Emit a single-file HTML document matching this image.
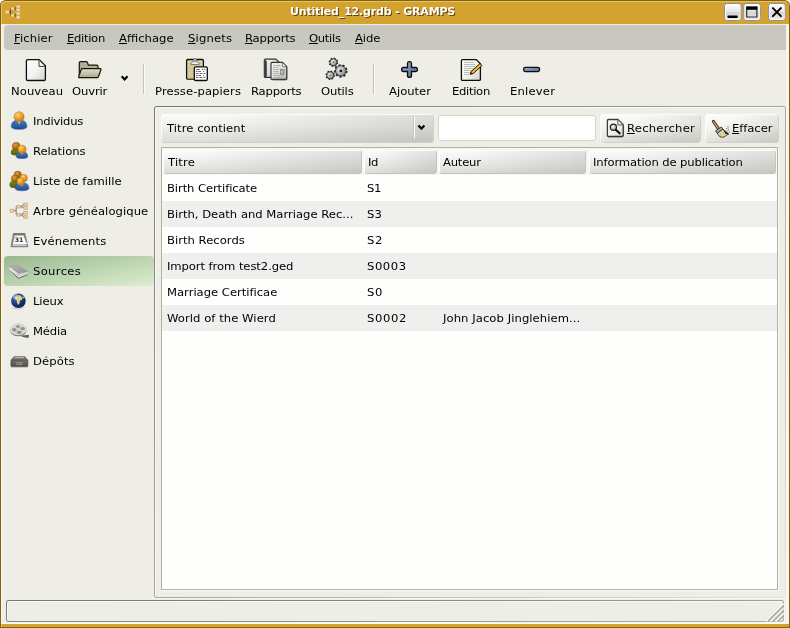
<!DOCTYPE html>
<html lang="fr">
<head>
<meta charset="utf-8">
<title>Untitled_12.grdb - GRAMPS</title>
<style>
*{box-sizing:border-box;margin:0;padding:0}
html,body{width:790px;height:628px;overflow:hidden;background:#fff}
body{font-family:"DejaVu Sans","Liberation Sans",sans-serif;font-size:11px;color:#000;position:relative}
#win{position:absolute;left:0;top:0;width:790px;height:628px;background:#85620f;border-radius:5.5px 5.5px 0 0;overflow:hidden}
#gold{position:absolute;left:1px;top:1px;width:788px;height:626px;background:#d4a22f;border-radius:4.5px 4.5px 0 0;border-top:1px solid #e6c262;border-left:1px solid #e6c262}
#inner{position:absolute;left:1px;top:24px;width:788px;height:600px;background:#eeede6;border-right:3px solid #f6f5f0;border-left:1px solid #f6f6f2;border-bottom:1px solid #fbfbf8}
#title{will-change:transform;position:absolute;left:290px;top:5px;height:13px;line-height:13px;color:#fff;font-weight:bold;font-size:11px;white-space:nowrap;text-shadow:1px 1px 0 rgba(70,45,0,.8);letter-spacing:-0.17px}
#menubar{position:absolute;left:4px;top:25px;width:782px;height:25px;background:#c9c8c0;border-radius:4px 0 0 4px}
.t{will-change:transform;transform:scaleX(1.055);transform-origin:0 0;position:absolute;height:13px;line-height:13px;white-space:nowrap}
.wb{position:absolute;top:3px;width:18px;height:18px}
.sep{position:absolute;top:64px;width:2px;height:30px;border-left:1px solid #c4c3bb;border-right:1px solid #fbfbf8}
.frame{position:absolute;border:1px solid;border-color:#97968d #fbfbf8 #fbfbf8 #97968d}
.gframe{position:absolute;padding:1px;border-radius:3px;box-shadow:1px 1px 0 rgba(255,255,255,.55)}
.gframe>div{width:100%;height:100%;background:#eeede6;border-radius:2px;box-shadow:inset 1px 1px 0 rgba(255,255,255,.6)}
.btn{position:absolute;border-radius:4px;background:linear-gradient(90deg,rgba(255,255,255,.35),rgba(255,255,255,0) 35%,rgba(0,0,0,.075)),linear-gradient(#fbfbf9,#f0f0ec 45%,#d6d5cf);box-shadow:inset 1px 1px 0 rgba(255,255,255,.8),inset -1px -1px 0 #d0cfc8}
.hdr{position:absolute;top:150px;height:24px;border-radius:3px;background:linear-gradient(90deg,rgba(0,0,0,0) 15%,rgba(0,0,0,.105)),linear-gradient(180deg,#fdfdfc,#efefec 45%,#dbdbd6);box-shadow:inset -1px -1px 0 #c6c6c0,inset 1px 1px 0 #fff}
.row{position:absolute;left:162px;width:615px;height:26px}
.alt{background:#eff0ee}
svg{position:absolute;overflow:visible;will-change:transform}
</style>
</head>
<body>
<div id="win">
 <div id="gold"></div>
 <div id="inner"></div>
 <div id="title">Untitled_12.grdb - GRAMPS</div>
 <svg style="left:0;top:0" width="24" height="24" viewBox="0 0 24 24">
  <path d="M9 12h1.5M10.5 8.7v6.6M10.5 8.7H11M10.5 15.3H11M14 8.7h.8M14 15.3h.8M14.8 8.7l1.8-2M14.8 8.7l1.8 1.2M14.8 15.3l1.8-1.8M14.8 15.3l1.8 1.9" stroke="#5d4712" stroke-width="1" fill="none"/>
  <g fill="#f4e2c4" stroke="#d9b98a" stroke-width=".6"><rect x="5.6" y="10.9" width="3.4" height="2.2"/><rect x="11" y="7.6" width="3" height="2.2"/><rect x="11" y="14.2" width="3" height="2.2"/><rect x="16.6" y="5.5" width="3.3" height="2.2"/><rect x="16.6" y="8.8" width="3.3" height="2.2"/><rect x="16.6" y="12.4" width="3.3" height="2.2"/><rect x="16.6" y="16" width="3.3" height="2.3"/></g>
 </svg>
 <svg style="left:724px;top:3px" width="62" height="19" viewBox="0 0 62 19">
  <defs><linearGradient id="wbg" x1="0" y1="0" x2="0" y2="1"><stop offset="0" stop-color="#fdfdfd"/><stop offset=".5" stop-color="#e6e6e6"/><stop offset=".52" stop-color="#d4d5d3"/><stop offset="1" stop-color="#e9e9e8"/></linearGradient></defs>
  <g id="wb0"><path d="M2.500.500h12.600l2 2v13l-2 2h-12.600l-2-2v-13z" fill="#fff" stroke="#8c93a3"/><path d="M2.500 1.800h12.600l.700.700v13l-.700.700h-12.600l-.700-.700v-13z" fill="url(#wbg)"/></g>
  <use href="#wb0" x="19.3"/><use href="#wb0" x="44.100"/>
  <rect x="3.3" y="12.6" width="10.6" height="2.3" rx="1.1" fill="#000"/>
  <path d="M22.8 4v10h10V4z" fill="none" stroke="#222" stroke-width="1.2"/><rect x="22.2" y="3.6" width="11.2" height="3.2" fill="#000"/><rect x="23.6" y="7" width="8.6" height="6.2" fill="#dcdcda" opacity=".6"/>
  <path d="M48.900 5.100l8 8M56.900 5.100l-8 8" stroke="#000" stroke-width="2" stroke-linecap="round"/>
 </svg>
 <div id="menubar"></div>
 <div class="t" style="left:14px;top:32px;letter-spacing:0.09px"><u>F</u>ichier</div>
 <div class="t" style="left:67px;top:32px;letter-spacing:-0.30px"><u>E</u>dition</div>
 <div class="t" style="left:119px;top:32px;letter-spacing:-0.00px"><u>A</u>ffichage</div>
 <div class="t" style="left:188px;top:32px;letter-spacing:0.14px"><u>S</u>ignets</div>
 <div class="t" style="left:245px;top:32px;letter-spacing:-0.20px"><u>R</u>apports</div>
 <div class="t" style="left:309px;top:32px;letter-spacing:-0.30px"><u>O</u>utils</div>
 <div class="t" style="left:355px;top:32px;letter-spacing:-0.11px"><u>A</u>ide</div>

 <!-- toolbar -->
 <svg style="left:0;top:50px" width="790" height="56" viewBox="0 50 790 56">
  <defs>
   <linearGradient id="pg" x1="0" y1="0" x2="1" y2="1"><stop offset="0" stop-color="#ffffff"/><stop offset=".55" stop-color="#f1f1ef"/><stop offset="1" stop-color="#cfcfcb"/></linearGradient>
   <linearGradient id="pg2" x1="0" y1="0" x2="1" y2="1"><stop offset="0" stop-color="#f4f4f3"/><stop offset=".5" stop-color="#dededc"/><stop offset="1" stop-color="#b4b4b1"/></linearGradient>
   <linearGradient id="fl" x1="0" y1="0" x2="0" y2="1"><stop offset="0" stop-color="#e2e3cf"/><stop offset="1" stop-color="#a8a989"/></linearGradient>
   <linearGradient id="bl" x1="0" y1="0" x2="1" y2="1"><stop offset="0" stop-color="#a9b9d3"/><stop offset=".5" stop-color="#7489ae"/><stop offset="1" stop-color="#566b92"/></linearGradient>
   <radialGradient id="gr" cx=".4" cy=".4" r=".7"><stop offset="0" stop-color="#f2f2f2"/><stop offset=".5" stop-color="#b2b2b2"/><stop offset="1" stop-color="#6a6a6a"/></radialGradient>
  </defs>
  <!-- new -->
  <path d="M27.6 59.6h11.6l6.2 6.2v13.4q0 1.2-1.2 1.2H27.6q-1.2 0-1.2-1.2V60.8q0-1.2 1.2-1.2z" fill="url(#pg)" stroke="#0c0c0c" stroke-width="1.3"/>
  <path d="M39 60.400v6h6" fill="#f2f2f0" stroke="#3a3a3a" stroke-width="1"/>
  <path d="M27 80.6h17.6" stroke="#b9b9b0" stroke-width="1" opacity=".8" transform="translate(.6 .9)"/>
  <!-- open folder -->
  <path d="M79.3 76.5V62.8q0-1.2 1.2-1.2h5.6q1 0 1.4 1l.9 2.6h8.4q1.2 0 1.2 1.2v2.2H82z" fill="#b0b192" stroke="#15150c" stroke-width="1.2" stroke-linejoin="round"/>
  <path d="M81.6 68.6h18.6q1.1 0 .7 1.1l-2.5 7q-.4 1-1.5 1H79.4q-1.1 0-.7-1.1z" fill="url(#fl)" stroke="#15150c" stroke-width="1.2" stroke-linejoin="round"/>
  <path d="M79.5 78.6h18.5" stroke="#b5b5aa" stroke-width="1" opacity=".8"/>
  <path d="M120.9 77.1l1.5-1.5 2.2 2.2 2.2-2.2 1.5 1.5-3.7 4z" fill="#000"/>
  <!-- clipboard -->
  <rect x="186.600" y="59.500" width="16.800" height="19.700" rx="1.200" fill="#ddd3a6" stroke="#0c0c0c" stroke-width="1.300"/>
  <path d="M187.800 63.500h14.400M187.800 65.500h14.400M187.800 67.500h14.400M187.800 69.500h14.400M187.800 71.500h14.400M187.800 73.500h14.400M187.800 75.500h14.400M187.800 77.500h14.400" stroke="#c6ba88" stroke-width=".800"/>
  <path d="M187.600 78.400h8" stroke="#b39a4a" stroke-width="1"/>
  <path d="M190.800 63.600l2.300-2.600q.2-2.500 1.900-2.500t1.900 2.500l2.300 2.600q.5.900-.500.900h-7.400q-1 0-.500-.900z" fill="#d9d9d9" stroke="#555" stroke-width=".700"/>
  <path d="M193.600 60.300h2.800v1.500h-2.800z" fill="#8a8a8a"/>
  <path d="M192.300 63.300h5.400" stroke="#f6f6f6" stroke-width="1"/>
  <rect x="194.300" y="66.900" width="13" height="13.600" rx="1.300" fill="#fdfdfd" stroke="#0c0c0c" stroke-width="1.300"/>
  <path d="M196 69.500h3.800M201.800 69.500h1.200M203.800 69.500h1.600M196 71.500h1.600M198.300 71.500h2.800M203 71.500h1.200M196 73.500h2.400M199.500 73.500h3M203.500 73.500h1.900M196 75.500h1.600M198.300 75.500h2.800M203 75.500h1M196 77.500h2.400M199.500 77.500h3M203.500 77.500h1.900" stroke="#6a6a6a" stroke-width="1"/>
  <!-- reports -->
  <path d="M265.300 59.100h10.600l4 4v13.300q0 1-1 1H265.300q-1 0-1-1V60.100q0-1 1-1z" fill="url(#pg2)" stroke="#333" stroke-width="1.100"/>
  <path d="M264.600 59.400l2.200 1.800v15.400l-2.200 .900z" fill="#3a3a3a"/>
  <path d="M272 62.400h10.500l4.200 4.200v11.800q0 1-1 1H272q-1 0-1-1V63.400q0-1 1-1z" fill="url(#pg2)" stroke="#333" stroke-width="1.100"/>
  <path d="M282.500 62.900v3.700h3.700" fill="#ededeb" stroke="#666" stroke-width=".700"/>
  <path d="M273.500 65.500h7M273.500 67.500h5M273.500 69.500h5.500M273.500 71.500h5M273.500 73.500h5.500M273.500 75.500h10M273.500 77.500h9" stroke="#a6a6a4" stroke-width="1" stroke-dasharray="2 .700 1.500 .600"/>
  <rect x="280.400" y="69.400" width="3.600" height="4.800" fill="#94a190" stroke="#6e6e6e" stroke-width=".500"/><rect x="281.300" y="70.600" width="1.400" height="2.800" fill="#ddd27a"/><rect x="282.600" y="70" width=".900" height="1.300" fill="#8aaed4"/>
  <path d="M272.500 80.300h13.800M287.400 67.500v12" stroke="#77776f" stroke-width="1" opacity=".6"/>
  <!-- gears -->
  <g fill="none" stroke="#1e1e1e">
   <circle cx="333.400" cy="62.300" r="3.900" stroke-width="1.700" stroke-dasharray="1.550 1.510"/>
   <circle cx="330.200" cy="75.300" r="3.900" stroke-width="1.700" stroke-dasharray="1.550 1.510"/>
   <circle cx="340.800" cy="70.900" r="5.700" stroke-width="2.100" stroke-dasharray="2.050 1.930"/>
  </g>
  <g fill="url(#gr)" stroke="#262626" stroke-width=".800">
   <circle cx="333.400" cy="62.300" r="3.600"/><circle cx="330.200" cy="75.300" r="3.600"/><circle cx="340.800" cy="70.900" r="5.300"/>
  </g>
  <circle cx="333.400" cy="62.300" r=".800" fill="#444"/><circle cx="330.200" cy="75.300" r=".800" fill="#444"/><circle cx="340.800" cy="70.900" r="1.400" fill="#1a1a1a"/>
  <!-- plus -->
  <path d="M409.500 61.600q2 0 2 2v3.900h3.900q2 0 2 2t-2 2h-3.900v3.900q0 2-2 2t-2-2v-3.900h-3.900q-2 0-2-2t2-2h3.900v-3.900q0-2 2-2z" fill="url(#bl)" stroke="#0d0d10" stroke-width="1.300"/>
  <!-- edit -->
  <path d="M462.600 59.600h13.600l4.200 4.200v15.400q0 1.200-1.200 1.200H462.600q-1.200 0-1.200-1.200V60.800q0-1.200 1.200-1.200z" fill="url(#pg)" stroke="#0c0c0c" stroke-width="1.300"/>
  <path d="M464 62.500h10M464 64.500h11M464 66.500h11M464 68.500h11M464 70.500h8M464 72.500h6M464 74.500h5" stroke="#b4b4b0" stroke-width=".9"/>
  <path d="M470.300 74.300l1-2.800 8.600-8 2 2.000-8.700 8.100z" fill="#f4b72a" stroke="#1a1405" stroke-width="1"/>
  <path d="M470.300 74.300l.7-2 1.500 1.400z" fill="#111"/>
  <!-- minus -->
  <rect x="523.600" y="67.400" width="16" height="4.200" rx="1.800" fill="url(#bl)" stroke="#0d0d10" stroke-width="1.300"/>
 </svg>
 <div class="t" style="left:11px;top:85px;letter-spacing:0.07px">Nouveau</div>
 <div class="t" style="left:72px;top:85px;letter-spacing:-0.15px">Ouvrir</div>
 <div class="sep" style="left:143px"></div>
 <div class="t" style="left:155px;top:85px;letter-spacing:0.08px">Presse-papiers</div>
 <div class="t" style="left:251px;top:85px;letter-spacing:-0.20px">Rapports</div>
 <div class="t" style="left:321px;top:85px;letter-spacing:-0.16px">Outils</div>
 <div class="sep" style="left:373px"></div>
 <div class="t" style="left:389px;top:85px;letter-spacing:-0.01px">Ajouter</div>
 <div class="t" style="left:452px;top:85px;letter-spacing:-0.30px">Edition</div>
 <div class="t" style="left:510px;top:85px;letter-spacing:0.18px">Enlever</div>

 <!-- sidebar -->
 <div id="sel" style="position:absolute;left:4px;top:256px;width:149.5px;height:29.5px;border-radius:4px;background:linear-gradient(to bottom right,#9ab790 0%,#bbd3b0 50%,#dceed0 100%)"></div>
 <svg style="left:0;top:106px" width="40" height="270" viewBox="0 106 40 270">
  <defs>
   <radialGradient id="hd" cx=".38" cy=".32" r=".75"><stop offset="0" stop-color="#fbd28a"/><stop offset=".45" stop-color="#f0a52f"/><stop offset="1" stop-color="#b9720c"/></radialGradient>
   <radialGradient id="hb" cx=".38" cy=".32" r=".75"><stop offset="0" stop-color="#d9a050"/><stop offset=".5" stop-color="#b07414"/><stop offset="1" stop-color="#7c4f08"/></radialGradient>
   <linearGradient id="bb" x1="0" y1="0" x2="0" y2="1"><stop offset="0" stop-color="#4a7dc0"/><stop offset="1" stop-color="#1f4b8e"/></linearGradient>
   <linearGradient id="ob" x1="0" y1="0" x2="0" y2="1"><stop offset="0" stop-color="#7a8a1c"/><stop offset="1" stop-color="#4f5f0a"/></linearGradient>
   <radialGradient id="gl" cx=".35" cy=".3" r=".8"><stop offset="0" stop-color="#4f7fc8"/><stop offset=".45" stop-color="#1c4286"/><stop offset="1" stop-color="#081638"/></radialGradient>
   <linearGradient id="bk" x1="0" y1="0" x2="1" y2="1"><stop offset="0" stop-color="#b9bbba"/><stop offset=".5" stop-color="#a2a6a8"/><stop offset="1" stop-color="#8f9291"/></linearGradient>
   <linearGradient id="bs" x1="0" y1="0" x2="1" y2="1"><stop offset="0" stop-color="#fafafa"/><stop offset="1" stop-color="#c4c5c3"/></linearGradient>
   <linearGradient id="dr" x1="0" y1="0" x2="0" y2="1"><stop offset="0" stop-color="#737066"/><stop offset="1" stop-color="#504e45"/></linearGradient>
   <g id="pers"><path d="M-8 7.300q0-5.300 5.200-6.200l2.800-.6 2.800.6q5.200.900 5.200 6.200q0 2.800-8 2.800t-8-2.800z" fill="url(#bb)" stroke="#2a5596" stroke-width=".600"/><path d="M-1.300 1l1.300 4.600 1.300-4.600z" fill="#f4f6fa"/></g>
  </defs>
  <!-- individus -->
  <g transform="translate(19.100 119.200) scale(.97 1)"><use href="#pers"/></g>
  <circle cx="19.100" cy="116.700" r="5.050" fill="url(#hd)" stroke="#c58116" stroke-width=".600"/>
  <!-- relations -->
  <path d="M10.900 152.500q0-4.200 4.800-4.400h1.800q3.500.2 3.500 3v3q-2 1.400-5.500 1.400t-4.600-1.400z" fill="url(#ob)"/>
  <circle cx="16.200" cy="146.200" r="3.900" fill="url(#hb)" stroke="#8a5a0c" stroke-width=".500"/>
  <g transform="translate(22 151) scale(.72 .75)"><use href="#pers"/></g>
  <circle cx="22" cy="149.300" r="4.100" fill="url(#hd)" stroke="#c58116" stroke-width=".500"/>
  <!-- famille -->
  <path d="M9.400 184.500q0-3.500 4.500-3.700h3l1 6.600q-1.500.600-4 .600q-4.500 0-4.500-3.500z" fill="url(#ob)"/>
  <circle cx="17.700" cy="174.800" r="3.700" fill="url(#hb)" stroke="#8a5a0c" stroke-width=".500"/>
  <circle cx="15" cy="178.700" r="3.700" fill="url(#hb)" stroke="#8a5a0c" stroke-width=".500"/>
  <g transform="translate(22 182) scale(.86 .86)"><use href="#pers"/></g>
  <circle cx="23.800" cy="178" r="3.700" fill="url(#hd)" stroke="#c58116" stroke-width=".500"/>
  <circle cx="20.700" cy="181.500" r="3.700" fill="url(#hd)" stroke="#c58116" stroke-width=".500"/>
  <!-- arbre -->
  <path d="M13.700 210.700h2.500M16.200 206.700v8.100M16.200 206.700h.6M16.200 214.800h.6M20.300 206.700h1.200M20.300 214.800h1.200M21.500 206.700l2.300-2.500M21.500 206.700l2.300 1.400M21.500 214.800l2.300-2M21.500 214.800l2.300 2.100" stroke="#8c8a82" stroke-width="1.200" fill="none"/>
  <g fill="#eed2ab" stroke="#c4a274" stroke-width=".700"><rect x="10.200" y="209.200" width="3.500" height="3"/><rect x="16.800" y="205.400" width="3.500" height="2.600"/><rect x="16.800" y="213.500" width="3.500" height="2.600"/><rect x="23.900" y="203.100" width="3.600" height="2.300"/><rect x="23.900" y="206.800" width="3.600" height="2.500"/><rect x="23.900" y="211.600" width="3.600" height="2.500"/><rect x="23.900" y="215.700" width="3.600" height="2.500"/></g>
  <!-- evenements -->
  <path d="M13 233.200h12.300l2.800 11.600v2.500H10.800v-2.500z" fill="#878985"/>
  <path d="M13.400 233.200h11.500l.4 1.600H13z" fill="#6d6f6b"/>
  <path d="M14.900 235.400h8.600l2.300 6.600 2.300 1.600-2.600.800H12.800z" fill="#fbfbfb"/>
  <path d="M12.600 245.500h13.800" stroke="#d9d9d7" stroke-width=".800"/>
  <text x="19.100" y="241.900" font-family="DejaVu Sans,Liberation Sans,sans-serif" font-weight="bold" font-size="6.200" text-anchor="middle" fill="#2b2b2b">31</text>
  <!-- sources: book -->
  <path d="M9.300 269.600l9 8.600 9.300-3.700" stroke="#4c4e4a" stroke-width="1" fill="none" stroke-linejoin="round"/>
  <path d="M9.600 266.700l9.300 6.900-.6 4.200-9-8.400z" fill="url(#bs)"/>
  <path d="M18.900 273.600l8.900-2.200-.4 2.900-9.100 3.500z" fill="#e0e0de" />
  <path d="M9.600 266.700l8.400-1.300 9.800 6-8.900 2.200z" fill="url(#bk)" stroke="#8a8c8a" stroke-width=".400"/>
  <path d="M19 275.300l8.500-2.700" stroke="#a9aaa7" stroke-width=".500"/>
  <!-- lieux: globe -->
  <circle cx="18.400" cy="300.800" r="7.300" fill="url(#gl)"/>
  <path d="M15 297q1.600-1.900 4-1.700l2.600.5-.2 1.300 1.300.6-.8 2-1.900.9-.6 2.800-1.400 1.600-1-2.500-.2-2-1.600-1.200z" fill="#e3cf96"/>
  <path d="M22.600 296l1.500 1 .3 1.600-1.400-.4z" fill="#d9c48a"/>
  <path d="M15.800 296.300l1.900-.8 1.400.4-1.300 1z" fill="#86a25a" opacity=".9"/>
  <ellipse cx="15.400" cy="296.600" rx="2.800" ry="1.800" fill="#fff" opacity=".4" transform="rotate(-30 15.400 296.600)"/>
  <path d="M12 308q6.500 2.400 12.600-.6" stroke="#aeada5" stroke-width="1" fill="none" opacity=".6"/>
  <!-- media -->
  <path d="M20 335.800q4.500-.500 9-1.100l-.5 3.200q-3.500-.300-6-1.200z" fill="#5e605c"/>
  <ellipse cx="18.400" cy="330.700" rx="8" ry="5.600" fill="#757773"/>
  <ellipse cx="18.300" cy="329.500" rx="8.100" ry="5.600" fill="#e9ebe8" stroke="#b4b6b2" stroke-width=".600"/>
  <ellipse cx="18.300" cy="329.500" rx="6.900" ry="4.600" fill="#d0d6cf"/>
  <g fill="#8e908c"><ellipse cx="18" cy="326.500" rx="2" ry="1.200"/><ellipse cx="14.300" cy="329.800" rx="2.300" ry="1.700"/><ellipse cx="22.700" cy="328.500" rx="2.300" ry="1.600"/><ellipse cx="19.200" cy="332.300" rx="2.500" ry="1.600"/></g>
  <!-- depots -->
  <path d="M14.200 356.500h10.400l3.300 3.800H10.900z" fill="#7d7b72" stroke="#55534a" stroke-width=".600"/>
  <path d="M14.800 357.300h9.200" stroke="#d0cfc9" stroke-width=".900"/>
  <rect x="10.900" y="360.100" width="17" height="6.600" rx=".800" fill="url(#dr)" stroke="#45433b" stroke-width=".600"/>
  <rect x="16.600" y="362.500" width="5.600" height="2" rx=".500" fill="#6f6d64" stroke="#b9b7ae" stroke-width=".500"/>
  <path d="M11 367.300h16.800" stroke="#b5b4ac" stroke-width=".800" opacity=".7"/>
 </svg>
 <div class="t" style="left:33px;top:115px;letter-spacing:-0.22px">Individus</div>
 <div class="t" style="left:33px;top:145px;letter-spacing:-0.10px">Relations</div>
 <div class="t" style="left:33px;top:175px;letter-spacing:-0.00px">Liste de famille</div>
 <div class="t" style="left:33px;top:205px;letter-spacing:0.05px">Arbre généalogique</div>
 <div class="t" style="left:33px;top:235px;letter-spacing:0.11px">Evénements</div>
 <div class="t" style="left:33px;top:265px;letter-spacing:0.31px">Sources</div>
 <div class="t" style="left:33px;top:295px;letter-spacing:-0.09px">Lieux</div>
 <div class="t" style="left:33px;top:325px;letter-spacing:-0.16px">Média</div>
 <div class="t" style="left:33px;top:355px;letter-spacing:0.08px">Dépôts</div>

 <!-- main frame -->
 <div class="gframe" style="left:154px;top:106px;width:632px;height:492px;background:linear-gradient(to bottom right,#77776f 0%,#a6a69e 50%,#e3e2db 100%)"><div></div></div>
 <div class="btn" id="combo" style="left:161px;top:113.5px;width:273px;height:29px;background:linear-gradient(90deg,rgba(0,0,0,0) 15%,rgba(0,0,0,.115)),linear-gradient(#fbfbf9,#efefeb 45%,#dcdbd5)"></div>
 <div style="position:absolute;left:413px;top:117px;width:2px;height:21px;border-left:1px solid #c9c8c0;border-right:1px solid #fff"></div>
 <div class="t" style="left:167px;top:122px;letter-spacing:0.05px">Titre contient</div>
 <div id="entry" style="position:absolute;left:438px;top:115px;width:158px;height:26px;background:#fff;border:1px solid #d9d5c4;border-radius:3px"></div>
 <div class="btn" style="left:600px;top:113.5px;width:100.8px;height:29px"></div>
 <div class="t" style="left:627px;top:122px;letter-spacing:0.22px"><u>R</u>echercher</div>
 <div class="btn" style="left:705px;top:113.5px;width:73.8px;height:29px"></div>
 <div class="t" style="left:732px;top:122px;letter-spacing:-0.06px"><u>E</u>ffacer</div>
 <svg style="left:400px;top:108px" width="390" height="40" viewBox="400 108 390 40">
  <path d="M417.600 126.300l1.500-1.500 2.300 2.300 2.300-2.300 1.500 1.500-3.800 3.900z" fill="#000"/>
  <!-- find -->
  <path d="M608.400 119.500h9.500l5.300 5.300v10.700q0 1-1 1H608.400q-1 0-1-1V120.500q0-1 1-1z" fill="url(#pg)" stroke="#3c3c3a" stroke-width="1.300"/>
  <path d="M617.900 120.100v4.800h4.800" fill="#f3f3f1" stroke="#4a4a48" stroke-width=".900"/>
  <path d="M608 136.800h14.600M623.500 125.500v10.600" stroke="#2c2c2a" stroke-width=".700" opacity=".7"/>
  <circle cx="613.400" cy="127.300" r="3.100" fill="#c4c4b4" stroke="#222" stroke-width="1.200"/>
  <circle cx="612.900" cy="126.700" r="1.300" fill="#ecece2"/>
  <path d="M615.800 129.800l3.800 3.500" stroke="#0e0e0e" stroke-width="2.100" stroke-linecap="round"/>
  <!-- clear brush -->
  <g transform="translate(.6 1.100) translate(720 128) scale(.94) translate(-720 -128)">
  <path d="M712.300 119.900l5.300 7.600" stroke="#33261a" stroke-width="3.300" stroke-linecap="round" fill="none"/>
  <path d="M712.400 120.100l5 7.200" stroke="#c7a67c" stroke-width="1.500" stroke-linecap="round" fill="none"/>
  <path d="M716.300 132.300l6-4.300 6.400 5.400-2.600 1-1.400 1.700-3 .500-2.300-.300z" fill="#e7dcac" stroke="#2a2612" stroke-width=".900" stroke-linejoin="round"/>
  <path d="M722.300 128l6.600 5.500-3.600-.400z" fill="#16160f"/>
  <path d="M718.800 131.500l2.600 4.600M720.800 130.200l3.400 4.600" stroke="#a89a5e" stroke-width=".700"/>
  <path d="M714.700 129.800l6.100-4 1.600 2.200-6.200 4.300z" fill="#9fb3ab" stroke="#252a27" stroke-width=".900" stroke-linejoin="round"/>
  <g fill="#4a4a45"><rect x="727.300" y="125.100" width="1" height="1"/><rect x="726" y="126.900" width="1" height="1"/><rect x="727.800" y="128.200" width="1" height="1"/><rect x="728.700" y="130.700" width="1" height="1"/><rect x="726.600" y="129.400" width=".800" height=".800"/><rect x="728.200" y="126.400" width=".800" height=".800" opacity=".6"/></g>
  </g>
 </svg>

 <!-- tree view -->
 <div id="tree" style="position:absolute;left:161px;top:147px;width:617px;height:443px;background:#fefefd;border:1px solid #b0b19e;box-shadow:1px 1px 0 #fbfbf8"></div>
 <div style="position:absolute;left:162px;top:148px;width:615px;height:27px;background:#f8f6ee"></div>
 <div class="row alt" style="top:201px"></div>
 <div class="row alt" style="top:253px"></div>
 <div class="row alt" style="top:305px"></div>
 <div class="hdr" style="left:163px;width:198.5px"></div>
 <div class="hdr" style="left:364px;width:72.7px"></div>
 <div class="hdr" style="left:439.2px;width:147.3px"></div>
 <div class="hdr" style="left:588.8px;width:186.8px"></div>
 <div class="t" style="left:168px;top:156px;letter-spacing:0.16px">Titre</div>
 <div class="t" style="left:368px;top:156px;letter-spacing:-0.30px">Id</div>
 <div class="t" style="left:443px;top:156px;letter-spacing:-0.22px">Auteur</div>
 <div class="t" style="left:593px;top:156px;letter-spacing:-0.13px">Information de publication</div>

 <div class="t" style="left:167px;top:182px;letter-spacing:-0.10px">Birth Certificate</div>
 <div class="t" style="left:367px;top:182px;letter-spacing:-0.30px">S1</div>
 <div class="t" style="left:167px;top:208px;letter-spacing:-0.01px">Birth, Death and Marriage Rec...</div>
 <div class="t" style="left:367px;top:208px;letter-spacing:0.10px">S3</div>
 <div class="t" style="left:167px;top:234px;letter-spacing:0.01px">Birth Records</div>
 <div class="t" style="left:367px;top:234px;letter-spacing:0.60px">S2</div>
 <div class="t" style="left:167px;top:260px;letter-spacing:-0.08px">Import from test2.ged</div>
 <div class="t" style="left:367px;top:260px;letter-spacing:0.50px">S0003</div>
 <div class="t" style="left:167px;top:286px;letter-spacing:-0.02px">Marriage Certificae</div>
 <div class="t" style="left:367px;top:286px;letter-spacing:0.60px">S0</div>
 <div class="t" style="left:167px;top:312px;letter-spacing:0.04px">World of the Wierd</div>
 <div class="t" style="left:367px;top:312px;letter-spacing:0.60px">S0002</div>
 <div class="t" style="left:443px;top:312px;letter-spacing:0.06px">John Jacob Jinglehiem...</div>

 <!-- status bar -->
 <div class="gframe" style="left:6px;top:600px;width:778px;height:22px;background:linear-gradient(175deg,#787873 0%,#8c8c87 45%,#b0b0aa 100%)"><div></div></div>
 <svg style="left:764px;top:602px" width="20" height="20" viewBox="764 602 20 20">
  <path d="M766.1 621.5l17.8-17.8M771.1 621.5l12.8-12.8M776.1 621.5l7.8-7.8" stroke="#fefefc" stroke-width="1.500"/>
  <path d="M769.2 621.5l14.7-14.7M774.2 621.5l9.7-9.7M779.2 621.5l4.7-4.7" stroke="#e3e2da" stroke-width="1.800" stroke-dasharray="1 1"/>
  <path d="M767.6 621.5l16.3-16.3M772.6 621.5l11.3-11.3M777.6 621.5l6.3-6.3" stroke="#a0a090" stroke-width="1.300"/>
 </svg>
</div>
</body>
</html>
